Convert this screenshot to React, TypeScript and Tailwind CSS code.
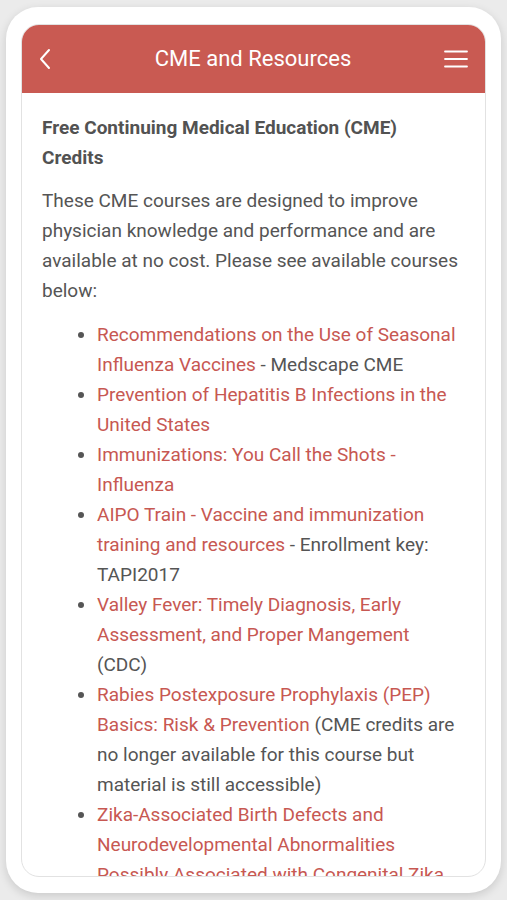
import React from "react";

const font = { fontFamily: "Roboto, 'Noto Sans', sans-serif" };

type Item = { link: string; rest?: string };

const items: Item[] = [
  { link: "Recommendations on the Use of Seasonal Influenza Vaccines", rest: " - Medscape CME" },
  { link: "Prevention of Hepatitis B Infections in the United States" },
  { link: "Immunizations: You Call the Shots - Influenza" },
  { link: "AIPO Train - Vaccine and immunization training and resources", rest: " - Enrollment key: TAPI2017" },
  { link: "Valley Fever: Timely Diagnosis, Early Assessment, and Proper Mangement", rest: " (CDC)" },
  { link: "Rabies Postexposure Prophylaxis (PEP) Basics: Risk & Prevention", rest: " (CME credits are no longer available for this course but material is still accessible)" },
  { link: "Zika-Associated Birth Defects and Neurodevelopmental Abnormalities Possibly Associated with Congenital Zika Virus Infection" },
];

export default function App() {
  return (
    <div className="h-[900px] w-[507px] bg-[#ebebeb] pt-[7px] px-[6px] overflow-hidden" style={font}>
      <div className="h-[886px] rounded-[32px] bg-white px-[15px] pt-[17px] pb-[16px] shadow-[0_3px_10px_rgba(0,0,0,0.14)]">
        <div className="h-full rounded-[18px] border border-[#e2e2e2] overflow-hidden flex flex-col bg-white">
          <div className="h-[68px] shrink-0 bg-[#c95a52] grid grid-cols-[1fr_auto_1fr] items-center pl-[16px] pr-[17px]">
            <svg width="14" height="22" viewBox="0 0 14 22">
              <path d="M11 2 L3 11 L11 20" fill="none" stroke="white" strokeWidth="2" strokeLinecap="round" strokeLinejoin="round" />
            </svg>
            <div className="text-white text-[22px] leading-none">CME and Resources</div>
            <svg width="24" height="18" viewBox="0 0 24 18" className="justify-self-end">
              <path d="M1 1.5 H23 M1 9 H23 M1 16.5 H23" stroke="white" strokeWidth="1.8" strokeLinecap="round" />
            </svg>
          </div>
          <div className="flex-1 overflow-hidden pl-[20px] pr-[24px] pt-[20px] text-[#555555]">
            <h2 className="text-[19px] font-bold leading-[30px] text-[#525252]">
              Free Continuing Medical Education (CME)
              <br />
              Credits
            </h2>
            <p className="mt-[13px] text-[19px] leading-[30px]">
              These CME courses are designed to improve physician knowledge and performance and are available at no cost. Please see available courses below:
            </p>
            <ul className="mt-[14px] list-disc pl-[55px] text-[19px] leading-[30px] marker:text-[#555555]">
              {items.map((it, i) => (
                <li key={i}>
                  <span className="text-[#c75852]">{it.link}</span>
                  {it.rest && <span>{it.rest}</span>}
                </li>
              ))}
            </ul>
          </div>
        </div>
      </div>
    </div>
  );
}
